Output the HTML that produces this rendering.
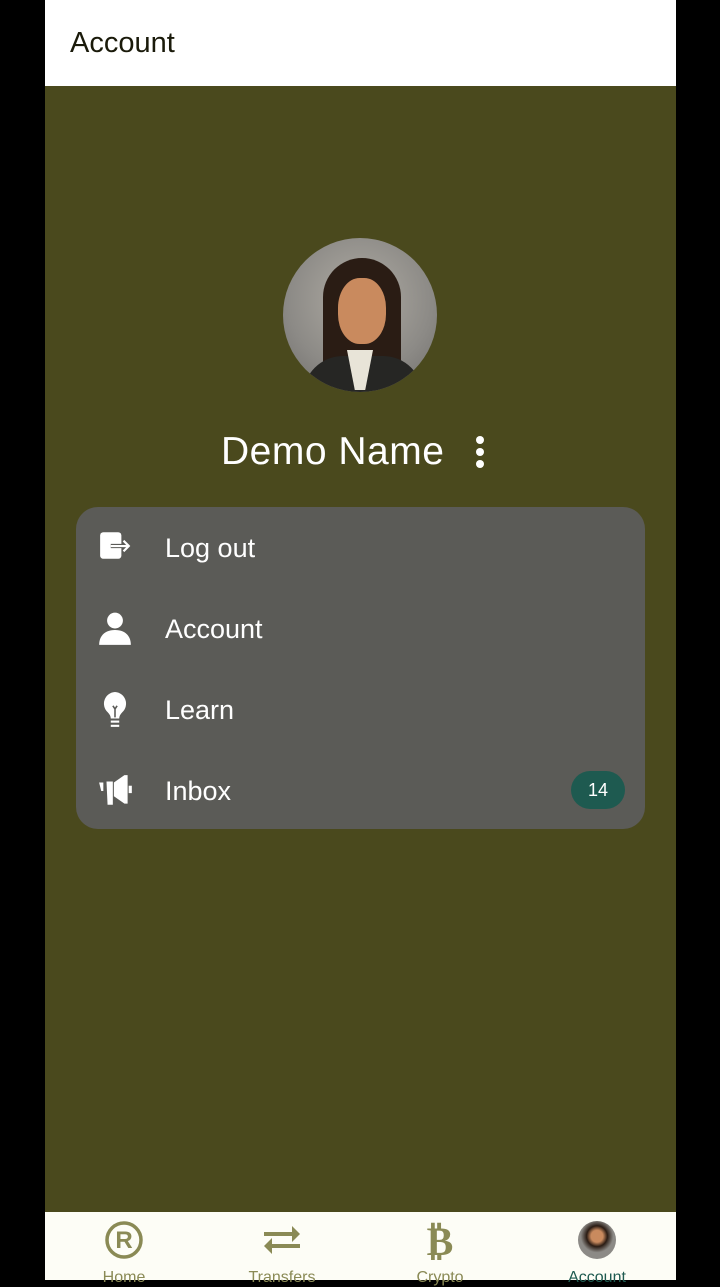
<!DOCTYPE html>
<html><head><meta charset="utf-8"><style>
*{margin:0;padding:0;box-sizing:border-box}
body{width:720px;height:1280px;background:#000;font-family:"Liberation Sans",sans-serif;position:relative;overflow:hidden}
.app{position:absolute;left:45px;top:0;width:631px;height:1280px;background:#4a491d}
.top{position:absolute;left:0;top:0;width:631px;height:86px;background:#fff;}
.top span{position:absolute;left:25px;top:27px;font-size:29px;color:#1a1a0a}
.av{position:absolute;left:238px;top:238px;width:154px;height:154px;border-radius:50%;overflow:hidden;background:radial-gradient(circle at 50% 40%,#b0aca4,#8c8a86 60%,#6e6c6a)}
.name{position:absolute;left:176px;top:430px;font-size:39px;color:#fff;letter-spacing:0.5px}
.dots{position:absolute;left:431px;top:436px;width:10px}
.dots i{display:block;width:8px;height:8px;border-radius:50%;background:#fff;margin-bottom:4px}
.card{position:absolute;left:31px;top:507px;width:569px;height:322px;border-radius:22px;background:#5b5b57}
.row{position:absolute;left:0;width:569px;height:81px}
.row span{position:absolute;left:89px;top:26px;font-size:27px;color:#fff}
.row svg{position:absolute;left:22px;top:22px}
.badge{position:absolute;right:20px;top:264px;width:54px;height:38px;border-radius:19px;background:#1e5a50;color:#fff;font-size:18px;text-align:center;line-height:38px}
.nav{position:absolute;left:0;top:1212px;width:631px;height:68px;background:#fdfdf6}
.nav .it{position:absolute;top:0;width:158px;text-align:center}
.nav .lb{position:absolute;top:57px;width:158px;font-size:16px;color:#8a8a55;text-align:center}
</style></head><body><div class="app">
<div class="top"><span>Account</span></div>
<div class="av">
 <div style="position:absolute;left:40px;top:20px;width:78px;height:120px;border-radius:40px 40px 10px 10px;background:#2a1c14"></div>
 <div style="position:absolute;left:55px;top:40px;width:48px;height:66px;border-radius:45%;background:#c98a5e"></div>
 <div style="position:absolute;left:20px;top:118px;width:120px;height:60px;border-radius:40px 40px 0 0;background:#262624"></div>
 <div style="position:absolute;left:64px;top:112px;width:26px;height:40px;background:#e8e4d8;clip-path:polygon(0 0,100% 0,70% 100%,30% 100%)"></div>
</div>
<div class="name">Demo Name</div>
<div class="dots"><i></i><i></i><i></i></div>
<div class="card">
 <div class="row" style="top:0"><svg width="34" height="34" viewBox="0 0 32 32"><rect x="2" y="3" width="20" height="25" rx="3" fill="#fff"/><path d="M12 16h17M24 11l5 5-5 5" stroke="#5b5b57" stroke-width="4" fill="none"/><path d="M12 16h17M24 11l5 5-5 5" stroke="#fff" stroke-width="2" fill="none"/></svg><span>Log out</span></div>
 <div class="row" style="top:81px"><svg width="34" height="38" viewBox="0 0 32 36"><circle cx="16" cy="10" r="7.5" fill="#fff"/><path d="M1 33c0-9 6-14 15-14s15 5 15 14z" fill="#fff"/></svg><span>Account</span></div>
 <div class="row" style="top:162px"><svg width="34" height="38" viewBox="0 0 32 36"><path d="M16 1a11 11 0 0 0-7 19c2 2 3 4 3 6h8c0-2 1-4 3-6a11 11 0 0 0-7-19z" fill="#fff"/><path d="M14 14l2 3 2-3M16 17v8" stroke="#5b5b57" stroke-width="1.5" fill="none"/><rect x="12" y="28" width="8" height="2" fill="#fff"/><rect x="12" y="32" width="8" height="2" fill="#fff"/></svg><span>Learn</span></div>
 <div class="row" style="top:243px"><svg width="36" height="38" viewBox="0 0 34 36"><path d="M1 10h4v8H3zM8 9h6v22H9z" fill="#fff"/><path d="M15 10l10-7h3v27h-3l-10-7z" fill="#fff"/><rect x="29" y="13" width="3" height="7" fill="#fff"/></svg><span>Inbox</span></div>
 <div class="badge">14</div>
</div>
<div class="nav">
 <div class="it" style="left:0"><svg width="40" height="40" viewBox="0 0 40 40" style="margin-top:8px"><circle cx="20" cy="20" r="17" stroke="#8a8a55" stroke-width="3.5" fill="none"/><text x="20" y="28" font-size="24" font-weight="bold" text-anchor="middle" fill="#8a8a55" font-family="Liberation Sans">R</text></svg><div class="lb" style="left:0">Home</div></div>
 <div class="it" style="left:158px"><svg width="40" height="40" viewBox="0 0 40 40" style="margin-top:8px"><path d="M2 12h28V6l8 8-8 8v-6H2zM38 24H10v-6l-8 8 8 8v-6h28z" fill="#8a8a55"/></svg><div class="lb" style="left:0">Transfers</div></div>
 <div class="it" style="left:316px"><svg width="40" height="40" viewBox="0 0 40 40" style="margin-top:8px"><text x="20" y="35" font-size="40" font-weight="bold" text-anchor="middle" fill="#8a8a55" font-family="DejaVu Sans">₿</text></svg><div class="lb" style="left:0">Crypto</div></div>
 <div class="it" style="left:473px"><div style="width:38px;height:38px;margin:9px auto 0;border-radius:50%;background:radial-gradient(circle at 50% 40%,#c98a5e 20%,#2a1c14 35%,#8c8a86 55%)"></div><div class="lb" style="left:0;color:#1e5a50">Account</div></div>
</div>
</div></body></html>
